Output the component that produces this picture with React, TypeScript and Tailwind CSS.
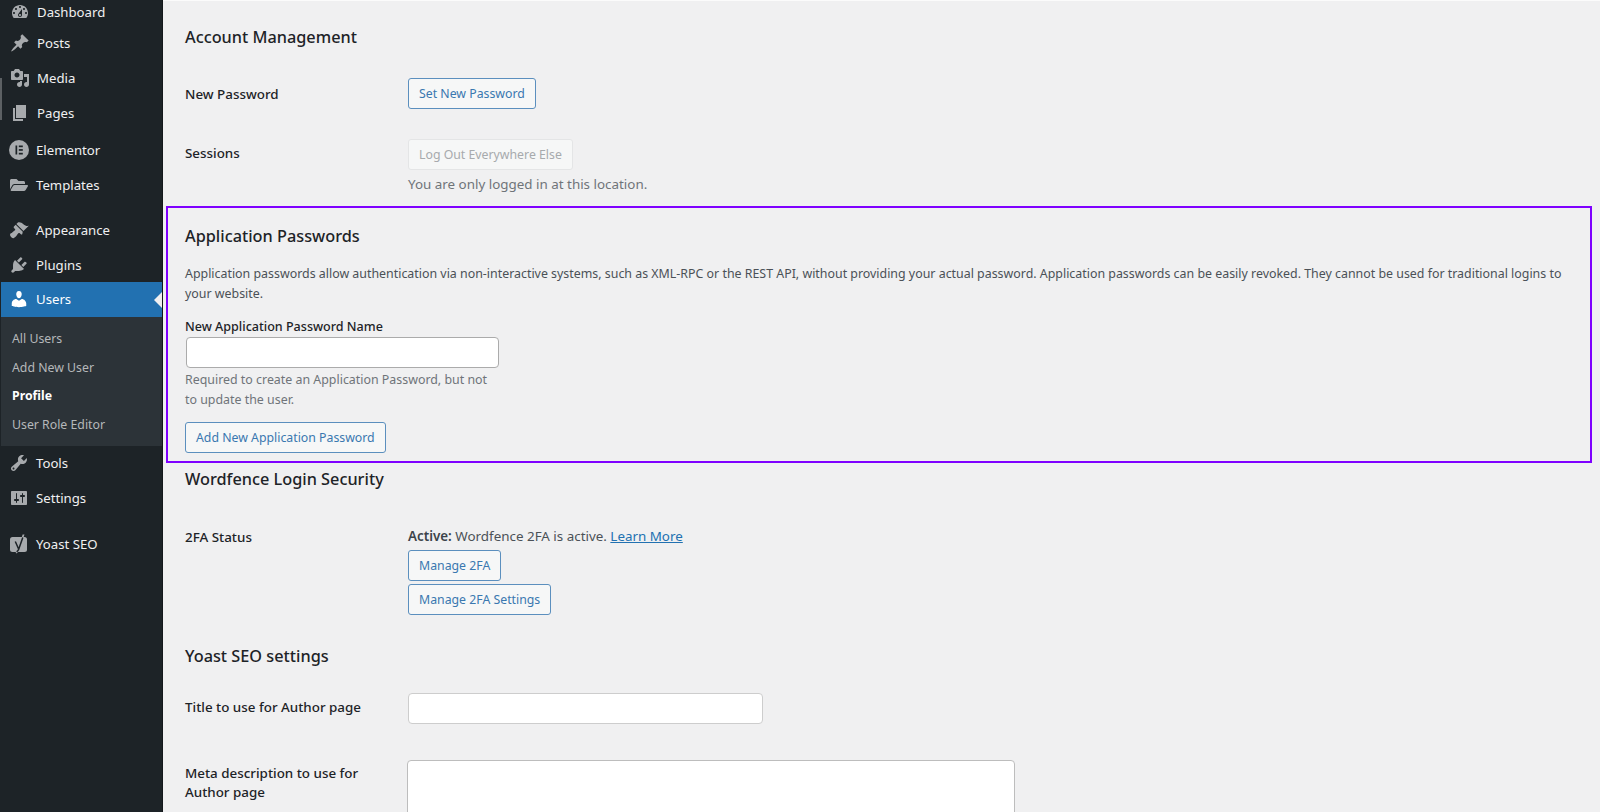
import React from 'react';
import { FaFolderOpen } from 'react-icons/fa';

const font = 'font-["Noto_Sans","Liberation_Sans",sans-serif]';

const paths: Record<string, string> = {
    dashboard: 'M3.76 16h12.48c1.1-1.37 1.76-3.11 1.76-5 0-4.42-3.58-8-8-8s-8 3.58-8 8c0 1.89.66 3.63 1.76 5zM10 4c.55 0 1 .45 1 1s-.45 1-1 1-1-.45-1-1 .45-1 1-1zM6 6c.55 0 1 .45 1 1s-.45 1-1 1-1-.45-1-1 .45-1 1-1zm8 0c.55 0 1 .45 1 1s-.45 1-1 1-1-.45-1-1 .45-1 1-1zm-5.37 5.55L12 7v6c0 1.1-.9 2-2 2s-2-.9-2-2c0-.57.24-1.08.63-1.45zM4 10c.55 0 1 .45 1 1s-.45 1-1 1-1-.45-1-1 .45-1 1-1zm12 0c.55 0 1 .45 1 1s-.45 1-1 1-1-.45-1-1 .45-1 1-1zm-5 3c0-.55-.45-1-1-1s-1 .45-1 1 .45 1 1 1 1-.45 1-1z',
    posts: 'M10.44 3.02l1.82-1.82 6.36 6.35-1.83 1.82c-1.05-.68-2.48-.57-3.41.36l-.75.75c-.92.93-1.04 2.35-.35 3.41l-1.83 1.82-2.41-2.41-2.8 2.79c-.42.42-3.38 2.71-3.8 2.29s1.86-3.39 2.28-3.81l2.79-2.79L4.1 9.36l1.83-1.82c1.05.69 2.48.57 3.4-.36l.75-.75c.93-.92 1.05-2.35.36-3.41z',
    media: 'M13 11V4c0-.55-.45-1-1-1h-1.67L9 1H5L3.67 3H2c-.55 0-1 .45-1 1v7c0 .55.45 1 1 1h10c.55 0 1-.45 1-1zM7 4.5c1.38 0 2.5 1.12 2.5 2.5S8.38 9.5 7 9.5 4.5 8.38 4.5 7 5.62 4.5 7 4.5zM14 6h5v10.5c0 1.38-1.12 2.5-2.5 2.5S14 17.88 14 16.5s1.12-2.5 2.5-2.5c.17 0 .34.02.5.05V9h-3V6zm-4 8.05V13h2v3.5c0 1.38-1.12 2.5-2.5 2.5S7 17.88 7 16.5 8.120 14 9.5 14c.17 0 .34.02.5.05z',
    pages: 'M6 15V2h10v13H6zm-1 1h8v2H3V5h2v11z',
    appearance: 'M14.48 11.06L7.41 3.99l1.5-1.5c.5-.56 2.3-.47 3.51.32 1.21.8 1.43 1.28 2.91 2.1 1.18.64 2.45 1.26 4.45.85zm-.71.71L6.7 4.7 4.93 6.47c-.39.39-.39 1.02 0 1.41l1.06 1.06c.39.39.39 1.03 0 1.42-.6.6-1.43 1.11-2.21 1.69-.35.26-.7.53-1.01.84C1.43 12.96.84 14.1 1.1 15.2c.2.9 1.2 2.2 2.3 2.9.8.3 1.9-.1 3.43-1.65.31-.31.58-.66.84-1.01.58-.78 1.09-1.61 1.69-2.21.39-.39 1.03-.39 1.42 0l1.06 1.06c.39.39 1.02.39 1.41 0z',
    plugins: 'M13.11 4.36L9.87 7.6 8 5.73l3.24-3.24c.35-.34 1.05-.2 1.56.32.52.51.66 1.21.31 1.55zm-8 1.77l.91-1.12 9.01 9.01-1.19.84c-.71.71-2.63 1.16-3.82 1.16H6.14L4.9 17.26c-.59.59-1.54.59-2.12 0-.59-.58-.59-1.53 0-2.12l1.24-1.24v-3.88c0-1.13.4-3.19 1.09-3.89zm7.26 3.97l3.24-3.24c.34-.35 1.04-.21 1.55.31.52.51.66 1.21.31 1.55l-3.24 3.25z',
    users: 'M10 9.25c-2.27 0-2.73-3.44-2.73-3.44C7 4.02 7.82 2 9.97 2c2.16 0 2.98 2.02 2.71 3.81 0 0-.41 3.44-2.68 3.44zm0 2.57L12.72 10c2.39 0 4.52 2.33 4.52 4.53v2.49s-3.65 1.13-7.24 1.13c-3.65 0-7.24-1.13-7.24-1.13v-2.49c0-2.25 1.94-4.48 4.47-4.48z',
    tools: 'M16.68 9.77c-1.34 1.34-3.3 1.67-4.95.99l-5.41 6.52c-.99.99-2.59.99-3.58 0s-.99-2.59 0-3.57l6.52-5.42c-.68-1.65-.35-3.61.99-4.95 1.28-1.28 3.12-1.62 4.72-1.06l-2.89 2.89 2.82 2.82 2.86-2.87c.53 1.58.18 3.39-1.08 4.65zM3.81 16.21c.4.39 1.04.39 1.43 0 .4-.4.4-1.04 0-1.43-.39-.4-1.03-.4-1.43 0-.39.39-.39 1.03 0 1.43z',
    settings: 'M18 16V4c0-.55-.45-1-1-1H3c-.55 0-1 .45-1 1v12c0 .55.45 1 1 1h14c.55 0 1-.45 1-1zM8 11h1c.55 0 1 .45 1 1s-.45 1-1 1H8v1.5c0 .28-.22.5-.5.5s-.5-.22-.5-.5V13H6c-.55 0-1-.45-1-1s.45-1 1-1h1V5.500c0-.28.22-.5.5-.5s.5.22.5.5V11zm5-2h-1c-.55 0-1-.45-1-1s.45-1 1-1h1V5.500c0-.28.22-.5.5-.5s.5.22.5.5V7h1c.55 0 1 .45 1 1s-.45 1-1 1h-1v5.500c0 .28-.22.5-.5.5s-.5-.22-.5-.5V9z',
};

const Dash = ({ name }: { name: string }) => (
    <svg viewBox="0 0 20 20" className="w-5 h-5 fill-current">
        <path d={paths[name]} />
    </svg>
);

const ElementorIcon = () => (
    <svg viewBox="0 0 20 20" className="w-5 h-5">
        <circle cx="10" cy="10" r="10" fill="currentColor" />
        <rect x="6.5" y="5.5" width="1.7" height="9" fill="#1d2327" />
        <rect x="9.8" y="5.5" width="4" height="1.7" fill="#1d2327" />
        <rect x="9.8" y="9.1" width="4" height="1.7" fill="#1d2327" />
        <rect x="9.8" y="12.8" width="4" height="1.7" fill="#1d2327" />
    </svg>
);

const YoastIcon = () => (
    <svg viewBox="0 0 20 20" className="w-5 h-5">
        <rect x="1" y="3" width="17" height="15" rx="2.5" fill="currentColor" />
        <path d="M13.600 0.500h1.900L10.400 15.500c-.5 1.700-1.500 3.200-3.300 4l-.4-1.300c1.100-.5 1.900-1.300 2.300-2.700L13.600 .5z" fill="currentColor" />
        <path d="M6.300 7.500l3.200 7.300M13.800 3.500L9.600 15.500c-.4 1.100-1 1.800-2 2.300" stroke="#1d2327" strokeWidth="1.500" fill="none" />
    </svg>
);

const MenuItem = ({
    icon,
    label,
    h,
    upper = false,
    active = false,
}: {
    icon: React.ReactNode;
    label: string;
    h: string;
    upper?: boolean;
    active?: boolean;
}) => (
    <div className={`relative flex items-center ${h} ${active ? 'bg-[#2271b1] text-white' : 'text-[#f0f0f1]'}`}>
        <div className={`flex justify-center ${upper ? 'w-[36px] pl-[1px]' : 'w-[35px]'} ${active ? 'text-white' : 'text-[#a7aaad]'}`}>{icon}</div>
        <span className="text-[13.2px] leading-[20px]">{label}</span>
        {active && (
            <div className="absolute right-0 top-1/2 -translate-y-1/2 border-y-[8px] border-r-[8px] border-y-transparent border-r-[#f0f0f1]" />
        )}
    </div>
);

const OutlineButton = ({ children, className = '' }: { children: React.ReactNode; className?: string }) => (
    <button
        type="button"
        className={`h-[31px] px-[10px] pt-[2px] text-[12.3px] leading-none text-[#3a78b0] bg-[#f6f7f7] border border-[#5b8fbe] rounded-[3px] whitespace-nowrap ${className}`}
    >
        {children}
    </button>
);

const SectionTitle = ({ children, className = '' }: { children: React.ReactNode; className?: string }) => (
    <h2 className={`text-[16.3px] leading-[24px] font-medium text-[#1d2327] ${className}`}>{children}</h2>
);

const rowLabel = 'text-[13.4px] leading-[20px] font-medium text-[#1d2327]';

const App: React.FC = () => {
    return (
        <div className={`relative flex h-[812px] overflow-hidden bg-[#f0f0f1] ${font}`}>
            <aside className="w-[163px] shrink-0 h-full bg-[#1d2327] pl-px pt-px border-r border-[#14181b]">
                <MenuItem h="h-[22px]" upper icon={<Dash name="dashboard" />} label="Dashboard" />
                <MenuItem h="h-[38px] mt-[1px]" upper icon={<Dash name="posts" />} label="Posts" />
                <MenuItem h="h-[32px]" upper icon={<Dash name="media" />} label="Media" />
                <MenuItem h="h-[36px] mt-[1px]" upper icon={<Dash name="pages" />} label="Pages" />
                <MenuItem h="h-[36px] mt-[1px]" icon={<ElementorIcon />} label="Elementor" />
                <MenuItem h="h-[34px]" icon={<FaFolderOpen className="w-[18px] h-[18px]" />} label="Templates" />
                <MenuItem h="h-[36px] mt-[10px]" icon={<Dash name="appearance" />} label="Appearance" />
                <MenuItem h="h-[34px]" icon={<Dash name="plugins" />} label="Plugins" />
                <MenuItem h="h-[35px] pb-[1px]" active icon={<Dash name="users" />} label="Users" />
                <div className="bg-[#2c3338] h-[129px] pl-[11px] pt-[8px] text-[12.3px] leading-[28.5px] text-[#b5b8ba]">
                    <div>All Users</div>
                    <div>Add New User</div>
                    <div className="font-bold text-white">Profile</div>
                    <div>User Role Editor</div>
                </div>
                <MenuItem h="h-[34px]" icon={<Dash name="tools" />} label="Tools" />
                <MenuItem h="h-[34px] mt-[1px]" icon={<Dash name="settings" />} label="Settings" />
                <MenuItem h="h-[36px] mt-[11px]" icon={<YoastIcon />} label="Yoast SEO" />
            </aside>

            <main className="flex-1 min-w-0 pl-[3px] pr-[8px] pt-px border-t border-white/70">
                <div className="pl-[19px]">
                    <SectionTitle className="mt-[23px]">Account Management</SectionTitle>
                    <div className="flex mt-[29px]">
                        <div className={`w-[223px] pt-[6px] ${rowLabel}`}>New Password</div>
                        <OutlineButton>Set New Password</OutlineButton>
                    </div>
                    <div className="flex mt-[30px]">
                        <div className={`w-[223px] pt-[4px] ${rowLabel}`}>Sessions</div>
                        <div>
                            <button
                                type="button"
                                disabled
                                className="h-[31px] px-[10px] pt-[2px] text-[12.3px] leading-none text-[#a7aaad] bg-[#f6f7f7] border border-[#e4e5e6] rounded-[3px]"
                            >
                                Log Out Everywhere Else
                            </button>
                            <p className="mt-[4px] text-[13.4px] leading-[20px] text-[#6f7479]">You are only logged in at this location.</p>
                        </div>
                    </div>
                </div>

                <section className="mt-[12px] h-[257px] border-2 border-[#7f00ff] pl-[17px] pr-[20px] pt-[16px]">
                    <SectionTitle>Application Passwords</SectionTitle>
                    <p className="mt-[16px] text-[12.4px] leading-[19.5px] text-[#4b5157]">
                        Application passwords allow authentication via non-interactive systems, such as XML-RPC or the REST API, without providing your actual password. Application passwords can be easily revoked. They cannot be used for traditional logins to your website.
                    </p>
                    <label className="block mt-[14px] text-[12.55px] leading-[19px] font-medium text-[#1d2327]">New Application Password Name</label>
                    <input type="text" className="block ml-px mt-[1px] w-[313px] h-[31px] bg-white border border-[#ababab] rounded-[4px]" />
                    <p className="mt-[2px] w-[312px] text-[12.4px] leading-[20px] text-[#6f7479]">
                        Required to create an Application Password, but not to update the user.
                    </p>
                    <OutlineButton className="mt-[12px] block">Add New Application Password</OutlineButton>
                </section>

                <div className="pl-[19px]">
                    <SectionTitle className="mt-[4px]">Wordfence Login Security</SectionTitle>
                    <div className="flex mt-[35px]">
                        <div className={`w-[223px] pt-[1px] ${rowLabel}`}>2FA Status</div>
                        <div className="text-[13.4px] leading-[20px] text-[#4b5157]">
                            <p>
                                <span className="font-semibold text-[#3c434a]">Active:</span> Wordfence 2FA is active.{' '}
                                <a href="#learn-more" className="text-[#2271b1] underline">Learn More</a>
                            </p>
                            <OutlineButton className="mt-[4px] block">Manage 2FA</OutlineButton>
                            <OutlineButton className="mt-[3px] block">Manage 2FA Settings</OutlineButton>
                        </div>
                    </div>
                    <SectionTitle className="mt-[29px]">Yoast SEO settings</SectionTitle>
                    <div className="flex mt-[25px]">
                        <div className={`w-[223px] pt-[4px] ${rowLabel}`}>Title to use for Author page</div>
                        <input type="text" className="w-[355px] h-[31px] bg-white border border-[#cdcdcd] rounded-[4px]" />
                    </div>
                    <div className="flex mt-[36px]">
                        <div className="w-[222px] pt-[4px] pr-[30px] text-[13.4px] leading-[19px] font-medium text-[#1d2327]">Meta description to use for Author page</div>
                        <textarea className="w-[608px] h-[100px] bg-white border border-[#bdbdbd] rounded-[4px]" />
                    </div>
                </div>
            </main>
            <div className="absolute left-0 top-[78px] w-[2px] h-[42px] bg-[#5c6063]" />
        </div>
    );
};

export default App;
